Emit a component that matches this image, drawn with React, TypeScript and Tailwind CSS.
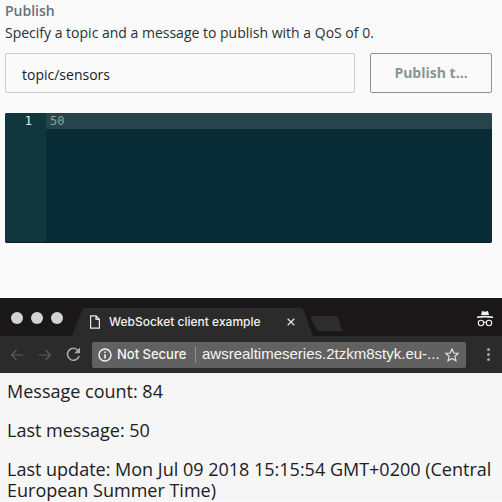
import React from "react";

const uiFont = "font-['Open_Sans','Noto_Sans',sans-serif]";
const chromeFont = "font-['Inter','Roboto',sans-serif]";

function PublishPanel() {
  return (
    <section className={`pt-0.5 pr-2.5 pl-[5px] text-sm text-[#263238] ${uiFont}`}>
      <h2 className="h-5 leading-[18px] font-semibold text-[#687078]">Publish</h2>
      <label htmlFor="topic" className="block h-[31px] leading-[22px]">
        Specify a topic and a message to publish with a QoS of 0.
      </label>
      <div className="flex gap-[15px]">
        <input
          id="topic"
          type="text"
          defaultValue="topic/sensors"
          className="h-10 min-w-0 flex-1 rounded-[2px] border border-[#cccccc] bg-[#fafafa] px-4 pt-0.5 text-sm text-[#16191f] outline-none"
        />
        <button
          type="button"
          className="h-10 w-[122px] shrink-0 rounded-[2px] border border-[#879596] text-sm font-bold text-[#879596]"
        >
          Publish t...
        </button>
      </div>
      <div className="mt-5 flex h-[130px] overflow-hidden rounded-[2px] border-b border-[#101c22] bg-[#082c35] font-['DejaVu_Sans_Mono','Liberation_Mono',monospace] text-xs leading-4">
        <div className="w-[41px] bg-[#12363e] pr-3.5 text-right text-[#e8eeee]">1</div>
        <textarea
          aria-label="Message payload"
          spellCheck={false}
          defaultValue="50"
          className="h-full min-w-0 flex-1 resize-none bg-[linear-gradient(#27444a_16px,#082c35_16px)] px-1 text-[#93a1a1] outline-none"
        />
      </div>
    </section>
  );
}

function TabStrip() {
  return (
    <div className="flex h-[38px] items-end bg-[#191718] text-[#f2f2f2]">
      <div className="flex h-full w-[72px] shrink-0 items-center gap-2 pt-0.5 pl-[11px]">
        <span className="size-3 rounded-full bg-[#d2d3d6]" />
        <span className="size-3 rounded-full bg-[#d2d3d6]" />
        <span className="size-3 rounded-full bg-[#d2d3d6]" />
      </div>
      <svg width="13" height="28" viewBox="0 0 13 28" className="shrink-0" fill="#2b2b2b" aria-hidden="true">
        <path d="M0 28 10 2Q11 0 13 0V28Z" />
      </svg>
      <div className="flex h-7 w-[216px] shrink-0 items-center bg-[#2b2b2b] pl-1">
        <svg width="12" height="14" viewBox="0 0 12 14" fill="none" stroke="#e8e8e8" strokeWidth="1.2" aria-hidden="true">
          <path d="M1.6.8H7L10.4 4.3V13.2H1.6ZM7 .8V4.3H10.4" />
        </svg>
        <span className="ml-2 flex-1 text-xs leading-4 font-medium whitespace-nowrap">WebSocket client example</span>
        <button type="button" aria-label="Close tab" className="mr-1 flex size-3 items-center justify-center">
          <svg width="8" height="8" viewBox="0 0 8 8" stroke="#e0e0e0" strokeWidth="1.3">
            <path d="M.7.7 7.3 7.3M7.3.7.7 7.3" />
          </svg>
        </button>
      </div>
      <svg width="12" height="28" viewBox="0 0 12 28" className="shrink-0" fill="#2b2b2b" aria-hidden="true">
        <path d="M0 0Q2 0 3 3L12 28H0Z" />
      </svg>
      <button type="button" aria-label="New tab" className="mb-[5px] -ml-1 shrink-0">
        <svg width="34" height="15" viewBox="0 0 34 15" fill="#2d2d2d" className="block">
          <path d="M3 0H26Q28 0 29 2L33 13Q34 15 32 15H10Q8 15 7 13L2 2Q1 0 3 0Z" />
        </svg>
      </button>
      <svg width="16" height="16" viewBox="0 0 16 16" className="mr-[9px] mb-[9px] ml-auto" fill="#f2f2f2" aria-hidden="true">
        <path d="M5 0 8 .7 11 0 12 4H4Z" />
        <path d="M0 5.4Q8 4.2 16 5.4V7Q8 6 0 7Z" />
        <g fill="none" stroke="#f2f2f2" strokeWidth="1.1">
          <circle cx="4" cy="12" r="2.7" />
          <circle cx="12" cy="12" r="2.7" />
          <path d="M6.7 11.5Q8 10.6 9.3 11.5" />
        </g>
      </svg>
    </div>
  );
}

function Toolbar() {
  return (
    <div className="flex h-[37px] items-center bg-[#2b2b2b] pr-2 pl-2.5">
      <button type="button" aria-label="Back" className="w-7">
        <svg width="14" height="12" viewBox="0 0 14 12" fill="none" stroke="#4d6165" strokeWidth="1.2" className="block">
          <path d="M13.5 6H1.5M6.5 1 1.5 6 6.5 11" />
        </svg>
      </button>
      <button type="button" aria-label="Forward" className="w-7">
        <svg width="14" height="12" viewBox="0 0 14 12" fill="none" stroke="#4d6165" strokeWidth="1.2" className="block">
          <path d="M.5 6H12.5M7.5 1 12.5 6 7.5 11" />
        </svg>
      </button>
      <button type="button" aria-label="Reload" className="w-[26px]">
        <svg width="15" height="15" viewBox="0 0 15 15" fill="none" stroke="#a5acac" strokeWidth="1.6" className="block">
          <path d="M12.1 3.5A6 6 0 1 0 13.2 9" />
          <path d="M14 .5V6.3H8.2Z" fill="#a5acac" stroke="none" />
        </svg>
      </button>
      <div className="flex h-[26px] min-w-0 flex-1 items-center rounded-[2px] bg-[#616161] pr-[7px] pl-1.5 text-[13px] text-[#f5f5f5]">
        <svg width="14" height="14" viewBox="0 0 14 14" fill="none" stroke="#f5f5f5" className="shrink-0" aria-hidden="true">
          <circle cx="7" cy="7" r="6" strokeWidth="1.4" />
          <path d="M7 6.2V10.5M7 3.4V5" strokeWidth="1.6" />
        </svg>
        <span className="ml-[5px] w-[72px] shrink-0 font-medium whitespace-nowrap">Not Secure</span>
        <span className="mx-[6px] h-4 w-px shrink-0 bg-[#929292]" />
        <input
          type="text"
          aria-label="Address"
          defaultValue="awsrealtimeseries.2tzkm8styk.eu-..."
          className="min-w-0 flex-1 bg-transparent font-['Liberation_Sans',Arial,sans-serif] text-[15px] outline-none"
        />
        <button type="button" aria-label="Bookmark this page" className="ml-1 shrink-0">
          <svg width="14" height="14" viewBox="0 0 14 14" fill="none" stroke="#e3e3e3" strokeWidth="1.2" className="block">
            <path d="M7 1 8.8 5 13.2 5.4 9.9 8.3 10.9 12.7 7 10.4 3.1 12.7 4.1 8.3.8 5.4 5.2 5Z" />
          </svg>
        </button>
      </div>
      <button type="button" aria-label="Menu" className="ml-4 flex w-3 flex-col items-center gap-0.5">
        <span className="size-[3px] rounded-full bg-[#a5a5a5]" />
        <span className="size-[3px] rounded-full bg-[#a5a5a5]" />
        <span className="size-[3px] rounded-full bg-[#a5a5a5]" />
      </button>
    </div>
  );
}

export default function App() {
  return (
    <main className="min-h-screen overflow-hidden bg-[#fafafa]">
      <PublishPanel />
      <section className={`mt-[55px] ${chromeFont}`}>
        <TabStrip />
        <Toolbar />
        <div className={`flex flex-col gap-[18px] bg-[#f6f6f6] px-[7px] pt-2 text-lg leading-[21px] text-[#1c2023] ${uiFont}`}>
          <p>Message count: 84</p>
          <p>Last message: 50</p>
          <p>Last update: Mon Jul 09 2018 15:15:54 GMT+0200 (Central European Summer Time)</p>
        </div>
      </section>
    </main>
  );
}
